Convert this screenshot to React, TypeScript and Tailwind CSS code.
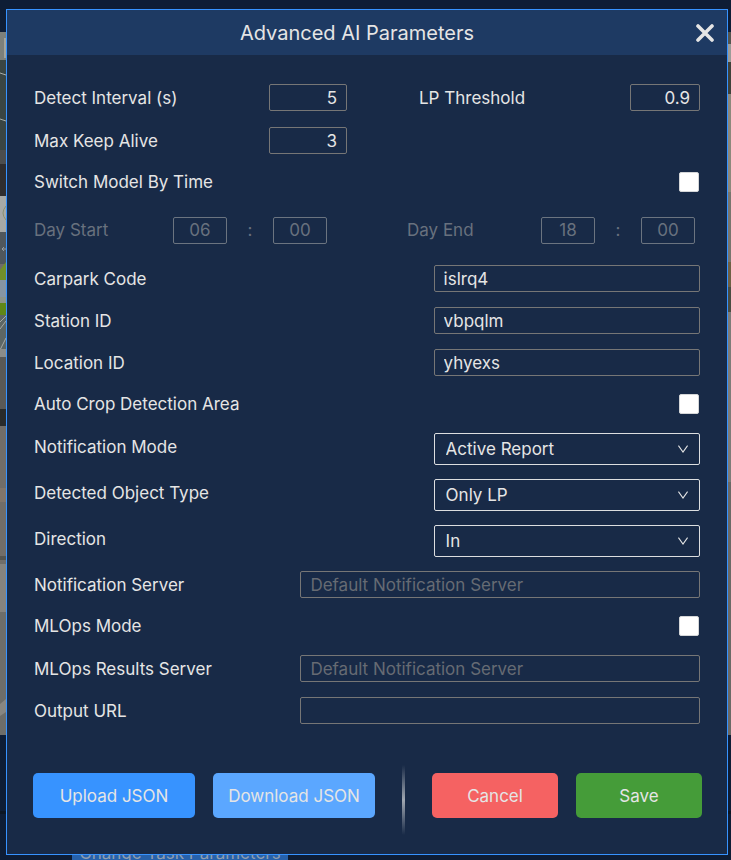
import { useId } from "react";

const BOX = "rounded-[2px] border border-[#767676] bg-transparent outline-none";
const FIELD = `${BOX} h-[27px] px-[9px]`;

function NumberField({ label, value, width }: { label: string; value: string; width: string }) {
  const id = useId();
  return (
    <div className="flex items-center justify-between">
      <label htmlFor={id}>{label}</label>
      <input id={id} inputMode="decimal" defaultValue={value} className={`${FIELD} ${width} text-right`} />
    </div>
  );
}

function TextRow({
  label,
  value,
  placeholder,
  width,
}: {
  label: string;
  value?: string;
  placeholder?: string;
  width: string;
}) {
  const id = useId();
  return (
    <div className="flex items-center justify-between pt-2 pb-[7px]">
      <label htmlFor={id}>{label}</label>
      <input
        id={id}
        type="text"
        defaultValue={value}
        placeholder={placeholder}
        className={`${FIELD} ${width} placeholder:text-[#666b73]`}
      />
    </div>
  );
}

function CheckRow({ label }: { label: string }) {
  const id = useId();
  return (
    <div className="flex h-[42px] items-center justify-between pr-px">
      <label htmlFor={id}>{label}</label>
      <input
        id={id}
        type="checkbox"
        className="size-5 appearance-none rounded-[2px] border border-[#d4d6d8] bg-white checked:bg-[#3793ff]"
      />
    </div>
  );
}

function SelectRow({ label, options }: { label: string; options: string[] }) {
  const id = useId();
  return (
    <div className="flex items-start justify-between pt-2 pb-1.5">
      <label htmlFor={id} className="leading-7">
        {label}
      </label>
      <div className="relative w-2/5">
        <select
          id={id}
          className="block h-8 w-full appearance-none rounded-[2px] border border-[#dcdee0] bg-[#182a47] pr-8 pl-[11px] outline-none"
        >
          {options.map((option) => (
            <option key={option}>{option}</option>
          ))}
        </select>
        <svg
          viewBox="0 0 10 8"
          className="pointer-events-none absolute top-3 right-3 h-2 w-2.5"
          fill="none"
          stroke="#e5e5e5"
          strokeWidth="1.1"
        >
          <path d="M0.4 0.6 5 7 9.6 0.6" />
        </svg>
      </div>
    </div>
  );
}

function TimeField({ label, hour, minute, width }: { label: string; hour: string; minute: string; width: string }) {
  const id = useId();
  const field = "h-[27px] w-[54px] rounded-[2px] border border-[#6b7480] bg-transparent text-center";
  return (
    <div className={`flex items-center ${width}`}>
      <label htmlFor={id} className="flex-1">
        {label}
      </label>
      <input id={id} disabled defaultValue={hour} className={field} />
      <span className="w-[46px] text-center">:</span>
      <input aria-label={`${label} minute`} disabled defaultValue={minute} className={field} />
    </div>
  );
}

function CameraView() {
  return (
    <div className="relative h-[703px] bg-[#6f6d68]">
      <svg viewBox="0 0 6 703" preserveAspectRatio="none" className="absolute left-0 h-full w-1.5">
        <rect width="6" height="28" fill="#7d807a" />
        <rect y="6" x="4" width="2" height="20" fill="#a3a49c" />
        <rect y="28" width="6" height="90" fill="#3a4543" />
        <path d="M0 41 6 43M0 87 6 89M0 122 6 124" stroke="#a9adaa" strokeWidth="1" />
        <rect y="118" width="6" height="14" fill="#4c4d4d" />
        <rect y="132" width="6" height="32" fill="#2f2d2e" />
        <rect y="164" width="6" height="36" fill="#a7a9a6" />
        <path d="M6 174Q0 181 6 188" fill="none" stroke="#8a9070" />
        <rect y="200" width="6" height="32" fill="#50575c" />
        <path d="M6 217H2M4 215 2 217 4 219" fill="none" stroke="#a5abb0" strokeWidth="0.8" />
        <path d="M0 238 6 230V250H0Z" fill="#708f2b" />
        <rect y="248" width="6" height="17" fill="#8795a2" />
        <rect y="265" width="6" height="6" fill="#8d9488" />
        <rect y="271" width="6" height="12" fill="#5f8718" />
        <rect y="283" width="6" height="34" fill="#5d6664" />
        <path d="M0 290 6 284M0 297 6 289M0 318 6 306" stroke="#a6aaa6" />
        <rect y="317" width="6" height="8" fill="#8b8c89" />
        <rect y="325" width="6" height="52" fill="#5a5956" />
        <rect y="377" width="6" height="17" fill="#292b2b" />
        <rect y="394" width="6" height="136" fill="#716d68" />
        <rect y="456" width="6" height="14" fill="#81756a" />
        <rect y="524" width="6" height="4" fill="#555550" />
        <rect y="532" width="6" height="48" fill="#85837e" />
        <rect y="580" width="6" height="123" fill="#6d6d69" />
        <path d="M0 672 6 667V680L0 684Z" fill="#878681" />
      </svg>
      <svg viewBox="0 0 3 703" preserveAspectRatio="none" className="absolute right-0 h-full w-[3px]">
        <rect width="3" height="12" fill="#54554f" />
        <rect y="12" width="3" height="18" fill="#9c9c98" />
        <rect y="30" width="3" height="32" fill="#3f413a" />
        <rect y="62" width="3" height="98" fill="#8c887c" />
        <rect y="160" width="3" height="70" fill="#77756e" />
        <rect y="230" width="3" height="25" fill="#6e6045" />
        <rect y="255" width="3" height="25" fill="#4a4c42" />
        <rect y="280" width="3" height="170" fill="#7d7c79" />
        <rect y="450" width="3" height="253" fill="#6a6966" />
      </svg>
    </div>
  );
}

export default function App() {
  return (
    <div className="relative min-h-screen overflow-hidden bg-[#0e1d35] font-[Inter,'Noto_Sans',sans-serif] text-[17px] leading-6 text-[#e5e5e5]">
      <div className="absolute inset-0 overflow-hidden" aria-hidden="true">
        <div className="h-8" />
        <CameraView />
        <div className="h-[79px] border-b-3 border-[#0c1623]" />
        <div className="mt-4 ml-[72px] flex h-[45px] w-[216px] items-center justify-center bg-[#2661ab] whitespace-nowrap text-[#8f9dae]">
          Change Task Parameters
        </div>
      </div>

      <form
        role="dialog"
        aria-labelledby="dialog-title"
        className="relative mt-[9px] mr-[3px] ml-1.5 border border-[#3793ff] bg-[#182a47]"
        onSubmit={(event) => event.preventDefault()}
      >
        <header className="flex h-[45px] items-center bg-[#1e3a63] px-3">
          <h1 id="dialog-title" className="flex-1 text-center text-xl">
            Advanced AI Parameters
          </h1>
          <button type="button" aria-label="Close" className="p-px">
            <svg viewBox="0 0 18 18" className="size-[18px]" stroke="#e5e5e5" strokeWidth="3.6" strokeLinecap="round">
              <path d="M2 2 16 16M16 2 2 16" />
            </svg>
          </button>
        </header>

        <div className="px-[27px] pt-[21px]">
          <div className="flex justify-between pt-2 pb-2">
            <div className="w-[47%]">
              <NumberField label="Detect Interval (s)" value="5" width="w-[78px]" />
            </div>
            <div className="w-[281px]">
              <NumberField label="LP Threshold" value="0.9" width="w-[70px]" />
            </div>
          </div>
          <div className="w-[47%] pt-2 pb-[7px]">
            <NumberField label="Max Keep Alive" value="3" width="w-[78px]" />
          </div>
          <CheckRow label="Switch Model By Time" />
          <div className="flex h-[54px] items-center justify-between pr-[5px] text-[#68717e]">
            <TimeField label="Day Start" hour="06" minute="00" width="w-[293px]" />
            <TimeField label="Day End" hour="18" minute="00" width="w-[288px]" />
          </div>
          <TextRow label="Carpark Code" value="islrq4" width="w-2/5" />
          <TextRow label="Station ID" value="vbpqlm" width="w-2/5" />
          <TextRow label="Location ID" value="yhyexs" width="w-2/5" />
          <CheckRow label="Auto Crop Detection Area" />
          <SelectRow label="Notification Mode" options={["Active Report", "Passive Report"]} />
          <SelectRow label="Detected Object Type" options={["Only LP", "Vehicle and LP"]} />
          <SelectRow label="Direction" options={["In", "Out"]} />
          <TextRow label="Notification Server" placeholder="Default Notification Server" width="w-3/5" />
          <CheckRow label="MLOps Mode" />
          <TextRow label="MLOps Results Server" placeholder="Default Notification Server" width="w-3/5" />
          <TextRow label="Output URL" width="w-3/5" />
        </div>

        <footer className="flex justify-between pt-[34px] pr-[25px] pb-[19px] pl-[26px]">
          <div className="flex gap-[18px] pt-2">
            <button type="button" className="h-[45px] w-[162px] rounded-[5px] bg-[#3793ff]">
              Upload JSON
            </button>
            <button type="button" className="h-[45px] w-[162px] rounded-[5px] bg-[#5ba7ff]">
              Download JSON
            </button>
          </div>
          <div className="h-[70px] w-[3px] bg-linear-to-b from-transparent via-[#a0a7b1] to-transparent" />
          <div className="flex gap-[18px] pt-2">
            <button type="button" className="h-[45px] w-[126px] rounded-[5px] bg-[#f56262]">
              Cancel
            </button>
            <button type="submit" className="h-[45px] w-[126px] rounded-[5px] bg-[#459c39]">
              Save
            </button>
          </div>
        </footer>
      </form>
    </div>
  );
}
